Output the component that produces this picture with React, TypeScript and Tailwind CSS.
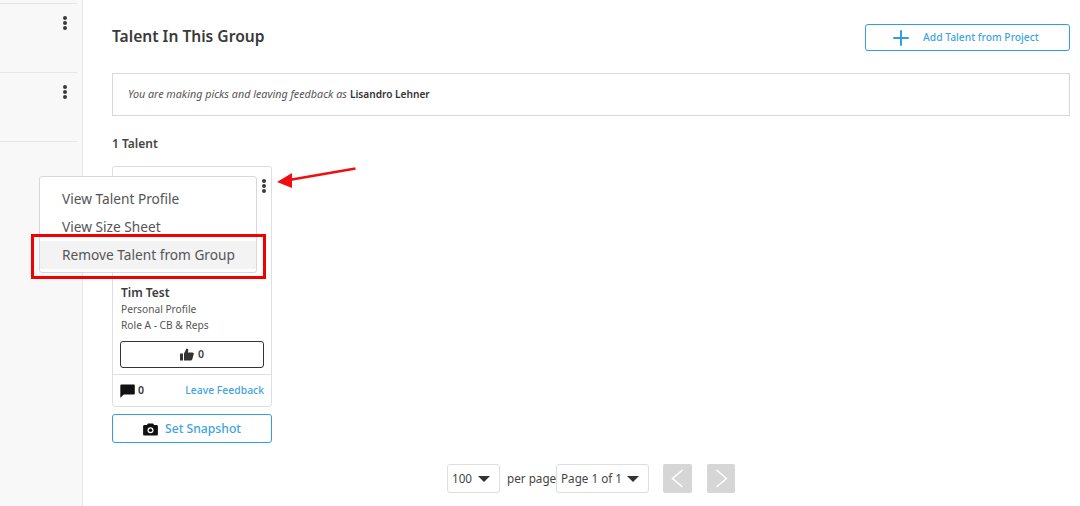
import React from "react";
import { Plus } from "lucide-react";

const font = { fontFamily: '"Noto Sans", "Open Sans", sans-serif' };

function Dots() {
  return (
    <div className="flex flex-col gap-[1px]">
      <span className="w-[4px] h-[4px] rounded-full bg-[#3a3a3a]" />
      <span className="w-[4px] h-[4px] rounded-full bg-[#3a3a3a]" />
      <span className="w-[4px] h-[4px] rounded-full bg-[#3a3a3a]" />
    </div>
  );
}

function Caret() {
  return <span className="w-0 h-0 border-l-[6px] border-r-[6px] border-t-[6px] border-l-transparent border-r-transparent border-t-[#333]" />;
}

function SideRow() {
  return (
    <div className="h-[69px] w-[77px] border-b border-[#e6e6e6] flex justify-end pr-[10px] pt-[12px]">
      <Dots />
    </div>
  );
}

export default function App() {
  return (
    <div className="w-[1080px] h-[506px] bg-white flex overflow-hidden relative text-[#3d3d3d]" style={font}>
      <aside className="w-[83px] shrink-0 bg-[#f8f8f8] border-r border-[#e6e6e6] pt-[3px]">
        <div className="w-[77px] border-t border-[#e6e6e6]" />
        <SideRow />
        <SideRow />
      </aside>

      <main className="flex-1 pl-[29px] pr-[10px]">
        <div className="flex justify-between items-start pt-[24px] h-[73px]">
          <h1 className="text-[15.6px] leading-[24px] font-semibold text-[#3a3a3a]">Talent In This Group</h1>
          <button className="w-[205px] h-[27px] border border-[#2d9fe0] rounded-[3px] flex items-center pl-[23px] text-[#3fa3e0] text-[10.3px] font-medium">
            <Plus size={24} strokeWidth={2} className="text-[#2d9fe0]" />
            <span className="ml-[10px]">Add Talent from Project</span>
          </button>
        </div>

        <div className="h-[43px] border border-[#d8d8d8] flex items-center pl-[15px]">
          <span className="italic text-[#555] text-[10.75px]">You are making picks and leaving feedback as</span>
          <span className="font-semibold text-[#333] ml-[3px] text-[10.15px]">Lisandro Lehner</span>
        </div>

        <div className="mt-[20px] text-[12px] leading-[16px] font-semibold text-[#444]">1 Talent</div>

        <div className="mt-[14px] w-[160px] h-[241px] border border-[#dedede] rounded-[3px] flex flex-col">
          <div className="h-[115px] flex justify-end pr-[5px] pt-[12px]">
            <Dots />
          </div>
          <div className="px-[7px] flex-1">
            <div className="text-[12px] leading-[18px] font-semibold text-[#3d3d3d] mt-[2px] pl-[1px]">Tim Test</div>
            <div className="text-[10.2px] leading-[16px] text-[#555] -mt-[1px] pl-[1px]">Personal Profile</div>
            <div className="text-[10.2px] leading-[16px] text-[#555] pl-[1px]">Role A - CB &amp; Reps</div>
            <button className="mt-[8px] w-[144px] h-[27px] border border-[#333] rounded-[3px] flex items-center justify-center gap-[4px] text-[10.5px] font-semibold">
              <svg width="14" height="13" viewBox="0 0 14 13" fill="#333">
                <rect x="0" y="5.5" width="3" height="7" />
                <path d="M4 5.5 L6.5 0.5 C8 0.5 8.6 1.6 8.2 3 L7.8 4.5 H12.4 C13.4 4.5 14 5.3 13.7 6.2 L12.2 11.6 C12 12.3 11.5 12.6 10.8 12.6 H4 Z" />
              </svg>
              <span>0</span>
            </button>
          </div>
          <div className="h-[32px] border-t border-[#dedede] flex items-center justify-between pl-[7px] pr-[7px] pt-[1px]">
            <span className="flex items-center gap-[3px] text-[10.5px] font-semibold text-[#333]">
              <svg width="15" height="14" viewBox="0 0 14 14" preserveAspectRatio="none" fill="#111">
                <path d="M1.2 0.5 H12.8 C13.4 0.5 13.8 0.9 13.8 1.5 V9.5 C13.8 10.1 13.4 10.5 12.8 10.5 H3.5 L0.3 13.8 V1.5 C0.3 0.9 0.6 0.5 1.2 0.5 Z" />
              </svg>
              0
            </span>
            <span className="text-[10.4px] font-medium text-[#3fa3e0]">Leave Feedback</span>
          </div>
        </div>

        <button className="mt-[7px] w-[160px] h-[29px] border border-[#2d9fe0] rounded-[3px] flex items-center justify-center gap-[7px] pt-[2px] text-[#3fa3e0] text-[12.2px] font-medium">
          <svg width="15" height="13" viewBox="0 0 15 13" fill="#111">
            <path d="M5 0.5 H10 L11.2 2 H13.5 C14.3 2 14.9 2.6 14.9 3.4 V11.2 C14.9 12 14.3 12.6 13.5 12.6 H1.5 C0.7 12.6 0.1 12 0.1 11.2 V3.4 C0.1 2.6 0.7 2 1.5 2 H3.8 Z" />
            <circle cx="7.5" cy="7.2" r="3" fill="#fff" />
            <circle cx="7.5" cy="7.2" r="1.7" fill="#111" />
          </svg>
          Set Snapshot
        </button>

        <div className="mt-[21px] flex items-center text-[11.7px] text-[#444] pl-[335px]">
          <div className="w-[53px] h-[29px] border border-[#dedede] rounded-[3px] flex items-center pl-[4px] gap-[6px]">
            <span>100</span>
            <Caret />
          </div>
          <span className="ml-[7px] w-[49px] whitespace-nowrap">per page</span>
          <div className="w-[93px] h-[29px] border border-[#dedede] rounded-[3px] flex items-center pl-[4px] gap-[5px]">
            <span>Page 1 of 1</span>
            <Caret />
          </div>
          <div className="ml-[14px] w-[29px] h-[29px] rounded-[2px] bg-[#d6d6d6] flex items-center justify-center">
            <svg width="13" height="19" viewBox="0 0 13 19" fill="none" stroke="#fff" strokeWidth="1.5">
              <path d="M11.5 1 L1.5 9.5 L11.5 18" />
            </svg>
          </div>
          <div className="ml-[15px] w-[28px] h-[29px] rounded-[2px] bg-[#d6d6d6] flex items-center justify-center">
            <svg width="13" height="19" viewBox="0 0 13 19" fill="none" stroke="#fff" strokeWidth="1.5">
              <path d="M1.5 1 L11.5 9.5 L1.5 18" />
            </svg>
          </div>
        </div>
      </main>

      {/* Context menu */}
      <div className="absolute left-[39px] top-[176px] w-[218px] h-[97px] bg-white border border-[#d8d8d8] rounded-[3px] pt-[8px] text-[13.7px] text-[#555]">
        <div className="h-[28px] leading-[28px] pl-[22px]">View Talent Profile</div>
        <div className="h-[28px] leading-[28px] pl-[22px]">View Size Sheet</div>
        <div className="h-[28px] leading-[28px] pl-[22px] bg-[#f3f3f3]">Remove Talent from Group</div>
      </div>

      {/* Annotation box */}
      <div className="absolute left-[31px] top-[234px] w-[235px] h-[45px] border-[3px] border-[#f00000]" />

      {/* Annotation arrow */}
      <svg className="absolute left-[274px] top-[164px]" width="86" height="28" viewBox="0 0 86 28">
        <line x1="81.5" y1="4.5" x2="15" y2="16" stroke="#ee0f12" strokeWidth="2.5" />
        <polygon points="3,18 18,9 18,24" fill="#ee0f12" />
      </svg>
    </div>
  );
}
